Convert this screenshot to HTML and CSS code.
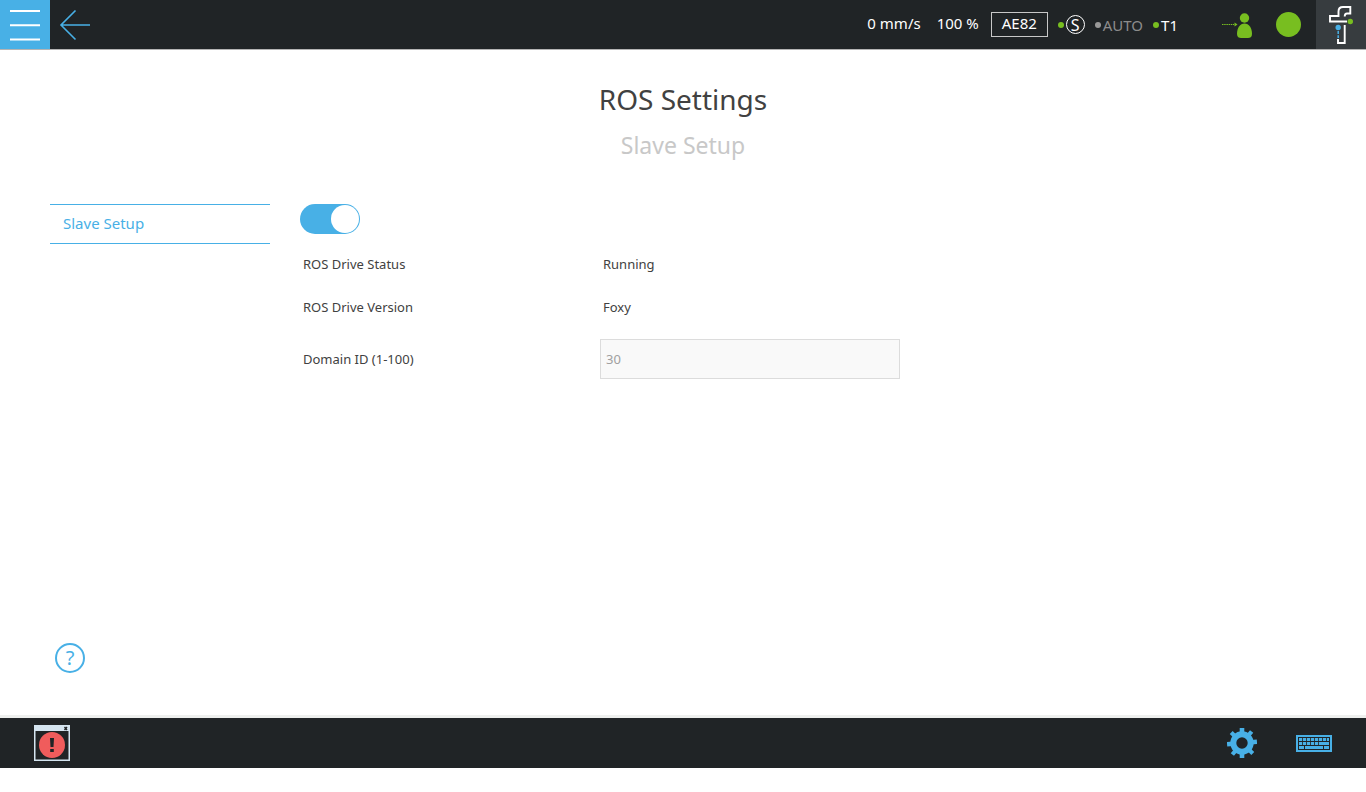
FILE: index.html
```html
<!DOCTYPE html>
<html lang="en">
<head>
<meta charset="utf-8">
<title>ROS Settings</title>
<link rel="stylesheet" href="styles.css">
</head>
<body>
<header class="topbar">
  <button class="menu" type="button" aria-label="Menu">
    <svg width="50" height="49" viewBox="0 0 50 49"><path d="M10 11H40M10 25.300H40M10 39.600H40" stroke="#fff" stroke-width="2" fill="none"/></svg>
  </button>
  <button class="back" type="button" aria-label="Back">
    <svg width="50" height="49" viewBox="0 0 50 49"><path d="M40 25H11M25.500 10.500L11 25L25.500 39.500" stroke="#48b0e6" stroke-width="1.600" fill="none"/></svg>
  </button>
  <div class="status">
    <span class="speed">0 mm/s</span>
    <span class="override">100 %</span>
    <span class="code">AE82</span>
    <span class="modes">
      <span class="mode"><i class="dot"></i><span class="safety">S</span></span>
      <span class="mode off"><i class="dot"></i>AUTO</span>
      <span class="mode"><i class="dot"></i>T1</span>
    </span>
  </div>
  <svg class="operator" width="32" height="28" viewBox="0 0 32 28" aria-hidden="true">
    <path d="M1 13.500H13" stroke="#78be20" stroke-width="1" stroke-dasharray="1.500 .7"/><path d="M13.500 11.500L16.500 13.500L13.500 15.500Z" fill="#78be20"/>
    <circle cx="23.500" cy="7" r="4.700" fill="#78be20"/>
    <path d="M16 23C16 17 19 12.500 23.500 12.500S31 17 31 23C31 26 29 27 27 27H20C18 27 16 26 16 23Z" fill="#78be20"/>
  </svg>
  <span class="lamp"></span>
  <button class="robot" type="button" aria-label="Robot">
    <svg width="50" height="49" viewBox="0 0 50 49">
      <path d="M31 21.500H14V16H22.500V11.500Q22.500 7 27 7H34.300V13.500H31Q28.700 13.500 28.700 16.500M28.700 25V43H22V39" fill="none" stroke="#fff" stroke-width="1.900"/>
      <path d="M22.200 31V38" stroke="#48b0e6" stroke-width="1.500" stroke-dasharray="3 1.200"/>
      <circle cx="22.200" cy="27.500" r="2.700" fill="#48b0e6"/><circle cx="34.300" cy="21.500" r="2.700" fill="#78be20"/>
    </svg>
  </button>
</header>

<main class="page">
  <h1 class="title">ROS Settings</h1>
  <h2 class="subtitle">Slave Setup</h2>
  <div class="content">
    <nav class="tabs"><a class="tab" href="#setup">Slave Setup</a></nav>
    <form class="settings" id="setup">
      <input class="switch" type="checkbox" aria-label="Slave Setup" checked>
      <dl class="facts">
        <dt>ROS Drive Status</dt><dd>Running</dd>
        <dt>ROS Drive Version</dt><dd>Foxy</dd>
      </dl>
      <div class="field">
        <label for="domain">Domain ID (1-100)</label>
        <input class="domain" id="domain" type="text" value="30" disabled>
      </div>
    </form>
  </div>
  <button class="help" type="button" aria-label="Help">?</button>
</main>

<footer class="bottombar">
  <button class="tool" type="button" aria-label="Errors">
    <svg width="36" height="36" viewBox="0 0 36 36">
      <path d="M0 0H36V36H0ZM1.500 6V34.500H34.500V6Z" fill="#d5e5f0" fill-rule="evenodd"/>
      <path d="M30.500 2L33 5M33 2L30.500 5" stroke="#202426" stroke-width="1.400"/>
      <circle cx="18" cy="20" r="13" fill="#f05c5c"/>
      <path d="M16 13H20L19.500 22H16.500ZM16.200 24H19.800V27H16.200Z" fill="#202426"/>
    </svg>
  </button>
  <span class="tools">
    <button class="tool" type="button" aria-label="Settings">
      <svg width="30" height="30" viewBox="0 0 30 30">
        <g fill="#48b0e6">
          <path d="M12.700 0H17.300V6H12.700ZM12.700 30H17.300V24H12.700Z"/>
          <path transform="rotate(40 15 15)" d="M12.900 0H17.100V6H12.900ZM12.900 30H17.100V24H12.900Z"/>
          <path transform="rotate(85 15 15)" d="M12.700 0H17.300V6H12.700ZM12.700 30H17.300V24H12.700Z"/>
          <path transform="rotate(134 15 15)" d="M12.900 0H17.100V6H12.900ZM12.900 30H17.100V24H12.900Z"/>
        </g>
        <circle cx="15" cy="15" r="8.700" fill="none" stroke="#48b0e6" stroke-width="6"/>
      </svg>
    </button>
    <button class="tool" type="button" aria-label="Keyboard">
      <svg width="36" height="17" viewBox="0 0 36 17">
        <path d="M1 1H35V16H1Z" fill="#202426" stroke="#48b0e6" stroke-width="2"/>
        <path d="M3 4.500H33M3 8.500H33" stroke="#48b0e6" stroke-width="3" stroke-dasharray="3.200 .8"/>
        <path d="M26 8.500H33M3 12.500H8M9 12.500H27M28 12.500H33" stroke="#48b0e6" stroke-width="3"/>
      </svg>
    </button>
  </span>
</footer>
</body>
</html>
```
FILE: styles.css
```css
* { box-sizing: border-box; }
body {
  margin: 0;
  min-height: 100vh;
  padding-bottom: 24px;
  display: flex;
  flex-direction: column;
  background: #fff;
  color: #414141;
  font: 14px/20px "Segoe UI", "Noto Sans", sans-serif;
}
button {
  padding: 0;
  border: 0;
  background: none;
  font: inherit;
  cursor: pointer;
}
svg { display: block; }

.topbar {
  height: 50px;
  display: flex;
  align-items: center;
  background: #202426;
  border-bottom: 1px solid #b4b4b4;
  color: #fff;
}
.menu { background: #48b0e6; }
.robot { background: #373c3f; }
.status {
  margin-left: auto;
  display: flex;
  align-items: center;
  font-size: 15px;
}
.speed, .override { padding-bottom: 3px; }
.speed { margin-right: 16px; }
.override { margin-right: 12px; }
.code {
  width: 57px;
  height: 25px;
  margin-right: 10px;
  border: 1px solid #c8c8c8;
  line-height: 21px;
  text-align: center;
}
.modes {
  display: flex;
  gap: 10px;
}
.mode {
  display: flex;
  align-items: center;
  gap: 2px;
}
.off { color: #8c8c8c; }
.dot {
  width: 6px;
  height: 6px;
  border-radius: 50%;
  background: #78be20;
}
.off .dot { background: #999; }
.safety {
  width: 19px;
  height: 19px;
  border: 1px solid #fff;
  border-radius: 50%;
  font-size: 16px;
  line-height: 18px;
  text-align: center;
}
.operator { margin-left: 43px; }
.lamp {
  width: 25px;
  height: 25px;
  margin: 0 15px 0 23px;
  border-radius: 50%;
  background: #78be20;
}

.page {
  flex: 1;
  display: flex;
  flex-direction: column;
  padding: 29px 50px 42px;
}
.title, .subtitle {
  margin: 0;
  font-weight: 400;
  text-align: center;
}
.title { font-size: 28px; line-height: 40px; }
.subtitle {
  margin: 10px 0 42px;
  color: #c8c8c8;
  font-size: 23px;
  line-height: 33px;
}
.content {
  display: flex;
  gap: 30px;
}
.tabs { width: 220px; }
.tab {
  display: block;
  padding: 0 13px 2px;
  border: solid #48b0e6;
  border-width: 1px 0;
  color: #48b0e6;
  font-size: 15px;
  line-height: 36px;
  text-decoration: none;
}
.settings {
  flex: 1;
  max-width: 600px;
  font-size: 13px;
}
.switch {
  appearance: none;
  display: flex;
  justify-content: flex-end;
  width: 60px;
  height: 30px;
  margin: 0;
  padding: 1px;
  border-radius: 15px;
  background: #48b0e6;
}
.switch::before {
  content: "";
  width: 28px;
  border-radius: 50%;
  background: #fff;
}
.facts {
  display: grid;
  grid-template-columns: 1fr 1fr;
  row-gap: 23px;
  margin: 20px 0 22px;
}
.facts dt, .facts dd { margin: 0; padding-left: 3px; }
.field {
  display: grid;
  grid-template-columns: 1fr 1fr;
  align-items: center;
}
.field label { padding-left: 3px; }
.domain {
  width: 100%;
  height: 40px;
  padding: 0 5px;
  border: 1px solid #dcdcdc;
  background: #f9f9f9;
  color: #a0a0a0;
  font: inherit;
}
.help {
  width: 30px;
  height: 30px;
  margin: auto 0 0 5px;
  border: 2px solid #48b0e6;
  border-radius: 50%;
  color: #48b0e6;
  font-size: 20px;
  line-height: 26px;
}

.bottombar {
  height: 53px;
  display: flex;
  align-items: center;
  justify-content: space-between;
  padding: 0 34px;
  border-top: 3px solid #eef0ee;
  background: #202426;
}
.tools {
  display: flex;
  align-items: center;
  gap: 39px;
}
```
